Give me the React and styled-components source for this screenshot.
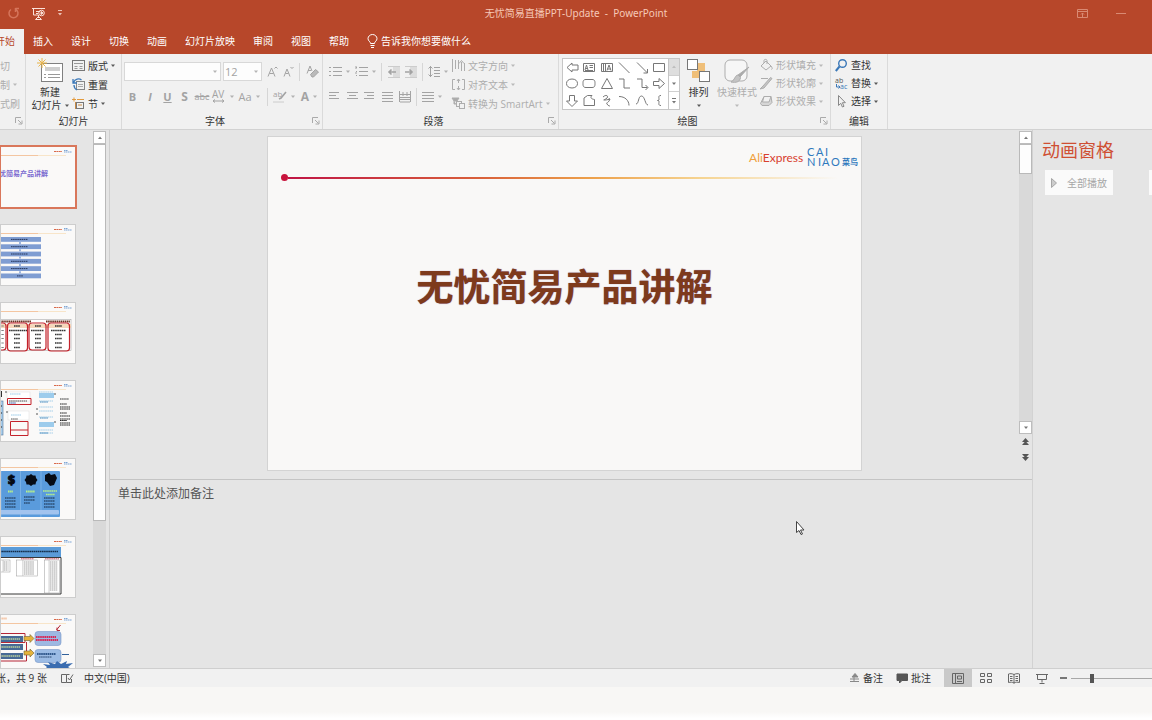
import React, { useState } from "react";
import styled, { createGlobalStyle } from "styled-components";

const GlobalStyle = createGlobalStyle`
  * {
    box-sizing: border-box;
  }
  body {
    margin: 0;
    background: #fff;
    overflow: hidden;
  }
  button, select, input, textarea {
    font-family: inherit;
    font-size: inherit;
    color: inherit;
    margin: 0;
  }
`;

const Window = styled.div`
  display: flex;
  flex-direction: column;
  height: 100vh;
  overflow: hidden;
  font-family: "Open Sans", "Noto Sans CJK SC", sans-serif;
  font-size: 10px;
  line-height: 14px;
  color: #333;
`;
const Svg = styled.svg`
  display: block;
  flex: none;
  overflow: visible;
  fill: none;
  stroke: currentColor;
`;
const PlainButton = styled.button`
  display: flex;
  align-items: center;
  justify-content: center;
  flex: none;
  padding: 0;
  border: 0;
  background: none;
  line-height: 14px;
  white-space: nowrap;
`;

// Title bar
const TitleBar = styled.header`
  display: grid;
  grid-template-columns: 1fr auto 1fr;
  align-items: center;
  flex: none;
  height: 27px;
  padding-bottom: 1px;
  background: #b7472a;
  color: #f6c9b8;
`;
const QuickAccess = styled.div`
  display: flex;
  align-items: center;
  gap: 12px;
  padding-left: 8px;
`;
const WindowTitle = styled.h1`
  margin: 0;
  font-family: "Noto Sans", "Noto Sans CJK SC", sans-serif;
  font-size: 10px;
  font-weight: 400;
`;
const WindowControls = styled.div`
  display: flex;
  justify-content: flex-end;
  gap: 28px;
  padding-right: 25px;
  color: #d98a73;
`;
const QuickButton = styled(PlainButton)`
  color: ${(p) => (p.$faded ? "#d5755b" : "#fbe3da")};
`;

// Tabs
const TabBar = styled.nav`
  display: flex;
  flex: none;
  height: 27px;
  padding-top: 2px;
  margin-left: -14px;
  background: #b7472a;
`;
const Tab = styled(PlainButton)`
  padding: 0 9px 2px;
  color: ${(p) => (p.$active ? "#b7472a" : "#fff")};
  background: ${(p) => (p.$active ? "#f1f1f1" : "none")};
`;
const TellMe = styled(Tab)`
  gap: 3px;
`;

// Ribbon
const Ribbon = styled.div`
  display: flex;
  flex: none;
  height: 76px;
  background: #f1f1f1;
  border-bottom: 1px solid #d2d2d2;
`;
const Group = styled.section`
  display: flex;
  flex-direction: column;
  flex: none;
  width: ${(p) => p.$width}px;
  padding-top: 2px;
  border-right: 1px solid #dadada;
`;
const GroupBody = styled.div`
  display: flex;
  height: 57px;
  padding-left: ${(p) => p.$left || 0}px;
`;
const GroupFooter = styled.div`
  display: flex;
  align-items: center;
  height: 16px;
`;
const GroupLabel = styled.h2`
  flex: 1;
  margin: 0;
  font-size: 10px;
  font-weight: 400;
  line-height: 16px;
  text-align: center;
`;
const LauncherButton = styled(PlainButton)`
  justify-content: flex-end;
  width: 14px;
  padding-right: 2px;
`;
const Stack = styled.div`
  display: flex;
  flex-direction: column;
  margin-left: ${(p) => p.$left || 0}px;
`;
const SmallButton = styled(PlainButton)`
  justify-content: flex-start;
  gap: 3px;
  height: ${(p) => (p.$tight ? 18 : 19)}px;
  color: ${(p) => (p.$disabled ? "#adadad" : "#333")};
`;
const BigButton = styled(PlainButton)`
  flex-direction: column;
  justify-content: flex-start;
  width: ${(p) => p.$width}px;
  height: 57px;
  padding-top: 2px;
  line-height: 13px;
  color: ${(p) => (p.$disabled ? "#adadad" : "#333")};
`;
const BigLabel = styled.span`
  display: flex;
  flex-direction: column;
  align-items: center;
  margin-top: 2px;
`;
const BigLine = styled.span`
  display: flex;
  align-items: center;
  gap: 3px;
  height: 13px;
`;
const ToolRow = styled.div`
  display: flex;
  align-items: center;
  height: 25px;
`;
const Tools = styled.div`
  padding-top: 3px;
`;
const Tool = styled(PlainButton)`
  gap: 4px;
  width: ${(p) => p.$w}px;
  height: 20px;
  font-size: ${(p) => p.$size || 11}px;
  font-weight: ${(p) => (p.$bold ? 700 : 400)};
  font-style: ${(p) => (p.$italic ? "italic" : "normal")};
  text-decoration: ${(p) => p.$line || "none"};
  color: #a3a3a3;
`;
const Divider = styled.span`
  flex: none;
  width: 1px;
  height: 18px;
  margin: 0 ${(p) => p.$gap || 3}px;
  background: #d6d6d6;
`;
const SelectBox = styled.label`
  display: flex;
  align-items: center;
  width: ${(p) => p.$w}px;
  height: 19px;
  margin-right: 2px;
  padding-right: 3px;
  border: 1px solid #d8d8d8;
  background: #fdfdfd;
  color: #a3a3a3;
  font-size: 11px;
`;
const FontSelect = styled.select`
  flex: 1;
  min-width: 0;
  padding: 0 1px;
  border: 0;
  appearance: none;
  background: none;
`;

const Gallery = styled.div`
  display: flex;
  height: 52px;
  margin-top: 2px;
  border: 1px solid #c6c6c6;
  background: #fff;
`;
const Shapes = styled.div`
  display: grid;
  grid-template-columns: repeat(6, 1fr);
  width: 105px;
`;
const GallerySide = styled.div`
  display: grid;
  grid-template-rows: repeat(3, 1fr);
  width: 11px;
  border-left: 1px solid #c6c6c6;
`;
const GalleryArrow = styled(PlainButton)`
  background: ${(p) => (p.$off ? "#dedede" : "#fff")};
  color: ${(p) => (p.$off ? "#b5b5b5" : "#555")};
  border-bottom: ${(p) => (p.$last ? 0 : "1px solid #d0d0d0")};
`;

// Workspace
const Workspace = styled.main`
  display: flex;
  flex: 1;
  min-height: 0;
  background: #e5e5e5;
`;
const ThumbPane = styled.aside`
  display: flex;
  flex: none;
  width: 110px;
  padding-right: 3px;
  border-right: 1px solid #cfcfcf;
`;
const ThumbList = styled.div`
  display: flex;
  flex-direction: column;
  gap: 16px;
  flex: 1;
  padding-top: 16px;
  overflow: hidden;
`;
const Thumb = styled.button`
  display: block;
  flex: none;
  width: 76px;
  height: 62px;
  padding: 0;
  border: 0;
  overflow: hidden;
  background: #faf9f8;
  outline: ${(p) => (p.$active ? "2px solid #d9775b" : "1px solid #cdcdcd")};
  outline-offset: -1px;
`;
const Scrollbar = styled.div`
  display: flex;
  flex-direction: column;
  flex: none;
  width: 13px;
  padding: 1px 0 ${(p) => p.$bottom || 1}px;
  color: #555;
`;
const ScrollArrow = styled(PlainButton)`
  height: 13px;
  border: 1px solid #bdbdbd;
  background: #fff;
`;
const ScrollTrack = styled.div`
  flex: 1;
  background: #d9d9d9;
`;
const ScrollThumb = styled.div`
  height: ${(p) => p.$size}%;
  border: 1px solid #b9b9b9;
  background: #fdfdfd;
`;
const SlideJump = styled(PlainButton)`
  height: 15px;
`;
const Editor = styled.div`
  display: flex;
  flex-direction: column;
  flex: 1;
  min-width: 0;
`;
const Stage = styled.div`
  display: flex;
  flex: 1;
  min-height: 0;
`;
const SlideArea = styled.div`
  display: flex;
  justify-content: center;
  flex: 1;
  min-width: 0;
  padding: 6px 0 8px;
`;
const Slide = styled.article`
  display: flex;
  flex-direction: column;
  height: 100%;
  aspect-ratio: 16 / 9;
  padding: 10px 3px 0 13px;
  border: 1px solid #d3d3d3;
  background: #f9f8f7;
`;
const Brand = styled.div`
  display: flex;
  justify-content: flex-end;
  align-items: center;
  gap: 4px;
  height: 22px;
`;
const AliExpress = styled.span`
  font-family: Lato, sans-serif;
  font-size: 12px;
  color: #d8402f;
`;
const Ali = styled.span`
  color: #f0a03c;
`;
const Rule = styled.div`
  display: flex;
  align-items: center;
  height: 7px;
  margin: 5px 20px 0 0;
`;
const RuleDot = styled.span`
  width: 7px;
  height: 7px;
  border-radius: 50%;
  background: #c8143c;
`;
const RuleLine = styled.span`
  flex: 1;
  height: 2px;
  background: linear-gradient(90deg, #c01545, #d9603a 35%, #eda04a 55%, #f6d491 75%, #f9f8f7);
`;
const SlideTitle = styled.h2`
  margin: 82px 0 0;
  padding-right: 10px;
  font-size: 37px;
  line-height: 48px;
  font-weight: 700;
  text-align: center;
  color: #7e3a1c;
  text-shadow: 0 0 1px #8a6a9a;
`;
const Notes = styled.textarea`
  display: block;
  flex: none;
  height: 189px;
  padding: 5px 8px;
  border: 0;
  border-top: 1px solid #c4c4c4;
  outline: 0;
  resize: none;
  background: #e5e5e5;
  font-size: 12px;
  line-height: 17px;
  color: #555;
  &::placeholder {
    color: #555;
    opacity: 1;
  }
`;
const AnimationPane = styled.aside`
  flex: none;
  width: 120px;
  padding: 7px 0 0 9px;
  border-left: 1px solid #d2d2d2;
  overflow: hidden;
`;
const PaneTitle = styled.h2`
  margin: 0 0 7px;
  font-size: 18px;
  line-height: 26px;
  font-weight: 400;
  color: #cf4f33;
`;
const PaneActions = styled.div`
  display: flex;
  gap: 36px;
  padding-left: 3px;
`;
const PlayAll = styled(PlainButton)`
  gap: 10px;
  width: 68px;
  height: 25px;
  background: #fafafa;
  color: #a6a6a6;
`;
const MoveButton = styled(PlainButton)`
  width: 25px;
  height: 25px;
  background: #fafafa;
`;

// Status bar
const StatusBar = styled.footer`
  display: flex;
  align-items: center;
  flex: none;
  height: 19px;
  border-top: 1px solid #cfcfcf;
  background: #f1f1f1;
  overflow: hidden;
`;
const SlideCount = styled.span`
  margin-left: -4px;
  margin-right: 14px;
  white-space: nowrap;
`;
const StatusButton = styled(PlainButton)`
  gap: 3px;
  margin-left: ${(p) => p.$gap || 0}px;
`;
const Spacer = styled.span`
  flex: 1;
`;
const Views = styled.div`
  display: flex;
  margin-left: 13px;
`;
const ViewButton = styled(PlainButton)`
  width: 28px;
  height: 18px;
  color: #666;
  background: ${(p) => (p.$active ? "#c9c9c9" : "none")};
`;
const Zoom = styled.input`
  flex: none;
  width: 112px;
  height: 12px;
  margin-left: 4px;
  margin-right: -31px;
  appearance: none;
  background: linear-gradient(#a8a8a8, #a8a8a8) center / 100% 1px no-repeat;
  &::-webkit-slider-thumb {
    appearance: none;
    width: 4px;
    height: 9px;
    background: #555;
  }
`;
const BottomStrip = styled.div`
  flex: none;
  height: 33px;
  background: linear-gradient(#f8f7f5 75%, #fff 95%);
`;
const Pointer = styled(Svg)`
  position: absolute;
  left: 796px;
  top: 521px;
  pointer-events: none;
`;

const Caret = ({ up, bar }) => (
  <Svg width="4" height={bar ? 6 : 3} viewBox={bar ? "0 0 4 6" : "0 0 4 3"} opacity=".8">
    {bar && <path d="M0 .5h4" />}
    <path d={up ? "M0 3h4L2 .5z" : bar ? "M0 3h4L2 5.500z" : "M0 .5h4L2 3z"} fill="currentColor" stroke="none" />
  </Svg>
);

const Launcher = () => (
  <LauncherButton aria-label="更多选项">
    <Svg width="8" height="8" viewBox="0 0 8 8" color="#aaa">
      <path d="M.5 6V.5H6M3 3l3.500 3.500M7 3.500V7H3.500" />
    </Svg>
  </LauncherButton>
);

const RibbonGroup = ({ label, width, left, launcher, children }) => (
  <Group $width={width}>
    <GroupBody $left={left}>{children}</GroupBody>
    <GroupFooter>
      <GroupLabel>{label}</GroupLabel>
      {launcher && <Launcher />}
    </GroupFooter>
  </Group>
);

const small = {
  layout: (
    <>
      <rect x=".5" y="1.500" width="12" height="10" stroke="#777" />
      <path d="M2 4.500h9M2.500 7.500h3M2.500 9.500h3M7.500 7.500h3M7.500 9.500h3" stroke="#999" />
    </>
  ),
  reset: (
    <>
      <rect x="4.500" y="3.500" width="8" height="8" stroke="#888" />
      <path d="M6 6.500h5M6 8.500h5" stroke="#aaa" />
      <path d="M1 1v4h4M1.500 4.500C3 1 7 0 9.500 2M2 7c0 2 1 4 3 5" stroke="#3b78b8" strokeWidth="1.300" />
    </>
  ),
  section: (
    <>
      <path d="M0 2.500h4M2 .500v4M5 2.500h7" stroke="#e39a3c" />
      <rect x="4.500" y="5.500" width="7" height="6" stroke="#777" />
      <path d="M3.500 5v7M6 8h4" stroke="#c98b45" />
    </>
  ),
  direction: <path d="M.5 0v13M3.500 1v9M6.500 1v9M9.500 3v9M7 4.500l2.500-3 2.500 3M12.500 4v8" />,
  align: <path d="M3 1.500H.500v10H3M10 1.500h2.500v10H10M6.500 1v4M5 3l1.500-2L8 3M6.500 12V8M5 10l1.500 2L8 10" />,
  smart: (
    <>
      <path d="M0 1h7L5 4H2zM2 4v3h2" fill="#aaa" />
      <rect x="4.500" y="4.500" width="5" height="5" fill="#f1f1f1" />
      <rect x="7.500" y="6.500" width="5" height="5" fill="#f1f1f1" />
    </>
  ),
  fill: <path d="M1 7l5-5 5 5-5 4zM4 4V1.500c0-1.500 3-1.500 3 0V5M11 7c1.500 2 1.500 3 .500 3.500" />,
  outline: (
    <>
      <path d="M8 1.500H1" />
      <path d="M0 12l4-1 8-9.500-1.500-1L3 9z" fill="#c4c4c4" />
    </>
  ),
  effect: <path d="M4 1.500h7l1 6-3 3H2l-1.500-2zM4 1.500L2.500 7H9l2-5.500" fill="#d6d6d6" />,
  find: (
    <>
      <circle cx="7.500" cy="4.500" r="3.800" stroke="#3b78b8" strokeWidth="1.400" />
      <path d="M4.500 7.500L.800 12" stroke="#3b78b8" strokeWidth="2" />
    </>
  ),
  select: <path d="M3.500 .500v10l2.300-2.200 1.600 3.700 1.600-.700-1.600-3.600h3z" stroke="#888" />,
};
const SmallIcon = ({ name }) => (
  <Svg width="13" height="13" viewBox="0 0 13 13">{small[name]}</Svg>
);

const SmallItem = ({ icon, text, caret, disabled, tight }) => (
  <SmallButton $disabled={disabled} $tight={tight}>
    {icon}
    {text}
    {caret && <Caret />}
  </SmallButton>
);

// Bars for the alignment buttons: [x, width] of each line
const Lines = ({ rows, w = 12 }) => (
  <Svg width={w} height="10" viewBox={`0 0 ${w} 10`}>
    {rows.map(([x, len], i) => (
      <path key={i} d={`M${x} ${i * 3 + 0.5}h${len}`} />
    ))}
  </Svg>
);

const shapes = [
  "M13 4H7V2L2 6.500 7 11V9h6V4z",
  "M1.500 2.500h11v8h-11zM3 9l1.500-5L6 9M3.500 7.500h2M7.500 4.500H11M7.500 6.500H11M3 9.500h8",
  "M1.500 2.500h11v8h-11zM3.500 3v7M5.500 3v7M7 9.500L9 4l2 5.500M7.500 8h3",
  "M2 1.500L12.500 12",
  "M2 1.500L12.500 12M12.500 8v4h-4",
  "M1.500 2.500h11v8h-11z",
  "M7 2c3.500 0 5.500 2 5.500 4.500S10.500 11 7 11 1.500 9 1.500 6.500 3.500 2 7 2z",
  "M4 2.500h6c3 0 3 2 3 4s0 4-3 4H4c-3 0-3-2-3-4s0-4 3-4z",
  "M7 1.500L12.500 11.500h-11z",
  "M2 2h5v9h6",
  "M2 2h5v8.500h5.500M10.500 8l2.500 2.500-2.500 2.500",
  "M1.500 4.500H7v-3l5.500 5-5.500 5v-3H1.500z",
  "M4.500 1.500h5V7h3L7 12.500 1.500 7h3z",
  "M2 11.500V4l3.500-2.500H10c-2 2-1 3.500 2.500 4v6z",
  "M3 3c3-3 6-1 4 1S2 6 5 6s6-2 4 1-3 1-2 3 3 2 3 2M9 4l1 2",
  "M2 2.500c6 0 10 4 10 9",
  "M1 10C4 10 3 2 6.500 2S10 11 13 11",
  "M9 1.500c-3 0-2 2-2 3.500S6.500 6.500 5.500 6.500c1 0 1.500 0 1.500 1.500s-1 3.500 2 3.500",
];

// Header that every miniature slide carries
const MiniHeader = () => (
  <>
    <path d="M0 9.500h38" stroke="#f2b98a" strokeWidth=".8" />
    <path d="M38 9.500h28" stroke="#f8e0bd" strokeWidth=".8" />
    <path d="M54 5.500h8" stroke="#d9694a" strokeDasharray="2 .4" />
    <path d="M64 4.500h4M64 6h8" stroke="#7fa6d6" strokeDasharray="1.500 .4" />
  </>
);
const scribble = (x, y, len, color = "#333", w = 1) => (
  <path key={`${x}-${y}`} d={`M${x} ${y}h${len}`} stroke={color} strokeWidth={w} strokeDasharray="1.600 .500" />
);

const minis = [
  <text x="48" y="30" textAnchor="end" fontSize="7" fontWeight="700" fill="#7c6bd0" stroke="none">忧简易产品讲解</text>,
  <>
    {[0, 1, 2, 3, 4, 5].map((i) => (
      <g key={i}>
        <rect x="-2" y={13 + i * 7.3} width="43" height="4.800" fill="#7f9dd2" stroke="none" />
        {scribble(i === 5 ? 17 : 11, 15.4 + i * 7.3, i === 5 ? 6 : 17, "#25355c")}
        {i < 5 && <path d={`M20 ${18 + i * 7.3}v2`} stroke="#9db4dd" strokeWidth="2" />}
      </g>
    ))}
  </>,
  <>
    <rect x="0" y="17.500" width="71" height="31" fill="#fff" stroke="#999" strokeWidth=".5" />
    <rect x="0" y="22" width="71" height="4" fill="#f5d7bb" stroke="none" />
    {scribble(0, 19.500, 31, "#6b3325", 2)}
    {scribble(46, 19.500, 24, "#6b3325", 2)}
    {[24, 28.500, 32.500, 36.500, 41, 45.500].map((y, i) => (
      <g key={y}>
        {scribble(0, y, 4, "#777")}
        {scribble(i === 1 ? 9 : 14, y, i === 1 ? 18 : 6, "#333", 1.500)}
        {scribble(i === 1 ? 31 : 35, y, i === 1 ? 13 : 6, "#333", 1.500)}
        {scribble(i === 1 ? 51 : 55, y, i === 1 ? 15 : 7, "#333", 1.500)}
      </g>
    ))}
    <g stroke="#c4222b" strokeWidth="1.200">
      <rect x="-8" y="21" width="14" height="27" rx="3" />
      <rect x="7.500" y="21" width="20" height="28" rx="3" />
      <rect x="29" y="21" width="17" height="27" rx="3" />
      <rect x="48" y="21" width="21.500" height="28" rx="3" />
    </g>
  </>,
  <>
    <rect x="0" y="11" width="2" height="6" fill="#333" stroke="none" />
    <rect x="-1" y="21" width="4" height="34" fill="#a8cdec" stroke="#55779a" strokeWidth=".6" />
    <path d="M0 26h2M0 33h2M0 40h2M0 47h2" stroke="#222" />
    <rect x="7" y="12" width="23" height="9" fill="#fff" stroke="#ddd" strokeWidth=".5" />
    {scribble(10, 14, 11, "#9ccbe8")}
    {scribble(9, 21, 18, "#555")}
    {scribble(9, 23, 7, "#315aa8")}
    <rect x="8" y="31" width="21" height="9" fill="#fff" stroke="#ddd" strokeWidth=".5" />
    {scribble(11, 35, 10, "#9ccbe8")}
    {scribble(11, 39, 7, "#555")}
    <path d="M7.500 18.500h23.500v6H7.500zM10.500 41.500H28v14H10.500zM10.500 50H28" stroke="#c4222b" />
    {[13, 42].map((y) => <rect key={y} x="39" y={y} width="15" height="5" fill="#9dccec" stroke="none" />)}
    {[12, 21, 27, 31, 37, 50, 53].map((y) => scribble(39, y, 14, "#a6cfe9"))}
    {[22, 38, 53].map((y) => scribble(40, y, 8, "#3f87bd"))}
    <path d="M54 14h2M36 29h2M36 34h2M54 42h2M5 12h2M6 32h2" stroke="#555" />
    {scribble(60, 19, 9, "#333")}
    {[24, 27, 29, 33, 36, 39, 40.500, 43, 45].map((y, i) => scribble(60, y, i % 3 ? 10 : 7, "#222"))}
  </>,
  <>
    <rect x="0" y="13" width="60" height="46" rx="1" fill="#5a9bdc" stroke="none" />
    <path d="M1 13v46M20.500 13v46M41 13v46" stroke="#78b0e6" />
    <text x="11.500" y="26" textAnchor="middle" fontSize="12" fontWeight="800" fill="#060b14" stroke="#060b14">$</text>
    <path d="M31 16l2 1.500 2.500 0 .500 2.500 1.500 2-1.500 2-.500 2.500h-2.500l-2 1.500-2-1.500h-2.500l-.500-2.500-1.500-2 1.500-2 .500-2.500h2.500z" fill="#060b14" stroke="none" />
    <path d="M45 17l4-2 2 2 4-1 2 4-3 7-4 1-3-4-2-1z" fill="#060b14" stroke="none" />
    {scribble(8, 33.500, 5, "#b6f08a", 2)}
    {scribble(26, 33.500, 9, "#b6f08a", 2)}
    {scribble(43, 33, 14, "#b6f08a", 1.500)}
    {scribble(46, 36.500, 9, "#b6f08a", 1.500)}
    {[40, 43, 46, 49].map((y, i) => (
      <g key={y}>
        {scribble(5, y, 11, "#12243c")}
        {i < 3 && scribble(24, y - 1, i === 2 ? 6 : 11, "#12243c")}
        {scribble(44, y, 11, "#12243c")}
      </g>
    ))}
    <rect x="0" y="52" width="59" height="4.500" rx="1" fill="#a2c3ee" stroke="none" />
  </>,
  <>
    <rect x="0" y="11" width="61" height="10" fill="#5b9bd8" stroke="none" />
    {scribble(0, 15.500, 58, "#142c48", 1.600)}
    <path d="M0 21.500h61v36.500H0" fill="#fff" stroke="#222" strokeWidth=".9" />
    {[[0, 24, 10, 12], [16.5, 24, 21, 16], [44.5, 24, 15, 33]].map(([x, y, w, h]) => (
      <g key={x}>
        <rect x={x} y={y} width={w} height={h} stroke="#999" strokeWidth=".5" />
        {Array.from({ length: Math.floor(h / 2) - 1 }, (_, i) => scribble(x + w * 0.35, y + 2 + i * 2, w * 0.5, "#888", 0.8))}
        <path d={`M${x + w * 0.3} ${y}v${h}`} stroke="#aaa" strokeWidth=".5" />
      </g>
    ))}
    {scribble(21, 22.800, 13, "#c95566")}
    {scribble(45, 22.800, 14, "#c95566")}
  </>,
  <>
    {scribble(0, 4.500, 7, "#f3c3a3", 2)}
    {[22, 30, 39].map((y) => (
      <g key={y}>
        <rect x="-2" y={y} width="25" height="6" fill="#476a96" stroke="none" />
        {scribble(0, y + 3, 20, "#b9cf9c", 1.500)}
      </g>
    ))}
    <path d="M0 19.500h25v9H0M26.500 28v19H0" stroke="#b52736" />
    <path d="M24 22.500h6v-2l4 4-4 4v-2h-6zM24 37h6v-2l4 4-4 4v-2h-6z" fill="#e5b33b" stroke="#6d6237" strokeWidth=".6" />
    <rect x="35" y="17.500" width="26" height="14" rx="3" fill="#9db8e2" stroke="#7897c7" strokeWidth=".6" />
    <rect x="35" y="35.500" width="26" height="13" rx="3" fill="#9bbbe4" stroke="#7897c7" strokeWidth=".6" />
    {scribble(36, 23, 20, "#d72957", 2)}
    {scribble(36, 26, 22, "#d72957", 2)}
    {scribble(37, 40, 19, "#30588c", 2)}
    {scribble(39, 43, 13, "#26456e", 1)}
    <path d="M60.500 11l-4 5M57 13.500v3h3" stroke="#b52736" />
    <path d="M62 40.500h7" stroke="#32619b" />
    <path d="M43 50l7 1-2-3 7 2 2-3 4 3 6-3-1 3 7-1-5 4 5 3H44l3-3z" fill="#3b6db0" stroke="none" />
  </>,
];

const tabs = ["开始", "插入", "设计", "切换", "动画", "幻灯片放映", "审阅", "视图", "帮助"];

function ScrollPart({ size, bottom, children }) {
  return (
    <Scrollbar $bottom={bottom}>
      <ScrollArrow aria-label="向上滚动"><Caret up /></ScrollArrow>
      <ScrollTrack>
        <ScrollThumb $size={size} />
      </ScrollTrack>
      <ScrollArrow aria-label="向下滚动"><Caret /></ScrollArrow>
      {children}
    </Scrollbar>
  );
}

function FontTools() {
  return (
    <Tools>
      <ToolRow>
        <SelectBox $w={97}>
          <FontSelect aria-label="字体" defaultValue=""><option value=""></option></FontSelect>
          <Caret />
        </SelectBox>
        <SelectBox $w={39}>
          <FontSelect aria-label="字号" defaultValue="12"><option>12</option></FontSelect>
          <Caret />
        </SelectBox>
        <Tool $w={16} aria-label="增大字号">
          <Svg width="11" height="12" viewBox="0 0 11 12"><path d="M1 10.500L4.500 2 8 10.500M2.500 7.500h4M7.500 2.500L9 1l1.500 1.500" /></Svg>
        </Tool>
        <Tool $w={16} aria-label="减小字号">
          <Svg width="11" height="12" viewBox="0 0 11 12"><path d="M1 10.500L4 3l3 7.500M2.500 7.500h3M7.500 1L9 2.500 10.500 1" /></Svg>
        </Tool>
        <Divider />
        <Tool $w={18} aria-label="清除格式">
          <Svg width="13" height="13" viewBox="0 0 13 13">
            <path d="M1 8.500L4 1l2 5M2 5.500h3" />
            <path d="M4.500 9.500l5-5L12.500 7l-5 5H6z" fill="#b9b9b9" />
          </Svg>
        </Tool>
      </ToolRow>
      <ToolRow>
        <Tool $w={17} $bold>B</Tool>
        <Tool $w={18} $bold $italic>I</Tool>
        <Tool $w={17} $bold $line="underline">U</Tool>
        <Tool $w={17} $bold $size={12}>S</Tool>
        <Tool $w={18} $size={9} $line="line-through">abc</Tool>
        <Tool $w={24}>
          <Svg width="14" height="13" viewBox="0 0 14 13">
            <text x="0" y="8" fontSize="10" fill="currentColor" stroke="none">AV</text>
            <path d="M1 11h11M3 9.500L1 11l2 1.500M10 9.500l2 1.500-2 1.500" />
          </Svg>
          <Caret />
        </Tool>
        <Tool $w={28}>Aa<Caret /></Tool>
        <Divider $gap={4} />
        <Tool $w={24} aria-label="突出显示">
          <Svg width="14" height="13" viewBox="0 0 14 13">
            <text x="0" y="7" fontSize="8" fill="currentColor" stroke="none">ab</text>
            <path d="M13 2L8 8l-2 1" strokeWidth="1.600" />
            <path d="M0 12h11" stroke="#ccc" />
          </Svg>
          <Caret />
        </Tool>
        <Tool $w={26} $bold $size={12}>A<Caret /></Tool>
      </ToolRow>
    </Tools>
  );
}

function ParagraphTools() {
  return (
    <Tools>
      <ToolRow>
        {[0, 1].map((n) => (
          <Tool key={n} $w={26} aria-label={n ? "编号" : "项目符号"}>
            <Svg width="13" height="12" viewBox="0 0 13 12">
              {[0, 1, 2].map((i) => (
                <path key={i} d={`M${n} ${i * 4 + 1.5}h${2 - n}M4 ${i * 4 + 1.5}h9`} />
              ))}
              {n === 1 && <path d="M1 0v3M0 7h2" />}
            </Svg>
            <Caret />
          </Tool>
        ))}
        <Divider />
        <Tool $w={17} aria-label="减少缩进">
          <Svg width="13" height="12" viewBox="0 0 13 12">
            <rect x="6" y="0" width="7" height="12" fill="#dcdcdc" stroke="none" />
            <path d="M9 6H2M4.500 3.500L2 6l2.500 2.500" strokeWidth="1.600" />
            <path d="M1 .5h12M1 11.500h12" stroke="#ccc" />
          </Svg>
        </Tool>
        <Tool $w={17} aria-label="增加缩进">
          <Svg width="13" height="12" viewBox="0 0 13 12">
            <rect x="6" y="0" width="7" height="12" fill="#dcdcdc" stroke="none" />
            <path d="M1 6h7M5.500 3.500L8 6 5.500 8.500" strokeWidth="1.600" />
            <path d="M1 .5h12M1 11.500h12" stroke="#ccc" />
          </Svg>
        </Tool>
        <Divider />
        <Tool $w={24} aria-label="行距">
          <Svg width="12" height="13" viewBox="0 0 12 13">
            <path d="M2.500 1v11M.500 3.500l2-2 2 2M.500 9.500l2 2 2-2M6 2.500h6M6 5.500h6M6 8.500h6M6 11.500h6" />
          </Svg>
          <Caret />
        </Tool>
      </ToolRow>
      <ToolRow>
        <Tool $w={17} aria-label="左对齐"><Lines rows={[[0, 10], [0, 7], [0, 10]]} w={11} /></Tool>
        <Tool $w={18} aria-label="居中"><Lines rows={[[0, 11], [2, 7], [0, 11]]} w={11} /></Tool>
        <Tool $w={17} aria-label="右对齐"><Lines rows={[[0, 10], [3, 7], [0, 10]]} w={11} /></Tool>
        <Tool $w={18} aria-label="两端对齐"><Lines rows={[[0, 11], [0, 11], [0, 11], [0, 11]]} w={11} /></Tool>
        <Tool $w={17} aria-label="分散对齐">
          <Svg width="12" height="12" viewBox="0 0 12 12"><path d="M.5 0v11M11.500 0v11M1 3.500h10M1 6.500h10M1 8.500h10M1 11h10M4 1v4M8 1v4" /></Svg>
        </Tool>
        <Divider />
        <Tool $w={24} aria-label="分栏"><Lines rows={[[0, 12], [0, 12], [0, 12], [0, 12]]} /><Caret /></Tool>
      </ToolRow>
    </Tools>
  );
}

function SlideCanvas() {
  return (
    <Slide>
      <Brand>
        <AliExpress><Ali>Ali</Ali>Express</AliExpress>
        <Svg width="51" height="20" viewBox="0 0 51 20">
          <g fill="#2f78bd" stroke="none" fontFamily="Lato, sans-serif" fontSize="11">
            <text x="0 9 18" y="8">CAI</text>
            <text x="0 11 15 24" y="18">NIAO</text>
            <text x="35" y="17" fontSize="8" fontWeight="700" fontFamily="Noto Sans CJK SC, sans-serif">菜鸟</text>
          </g>
        </Svg>
      </Brand>
      <Rule>
        <RuleDot />
        <RuleLine />
      </Rule>
      <SlideTitle>无忧简易产品讲解</SlideTitle>
    </Slide>
  );
}

function App() {
  const [tab, setTab] = useState(0);
  const [current, setCurrent] = useState(0);
  const [zoom, setZoom] = useState(18);

  return (
    <Window>
      <GlobalStyle />
      <TitleBar>
        <QuickAccess>
          <QuickButton $faded aria-label="重做">
            <Svg width="12" height="12" viewBox="0 0 12 12"><path d="M7.500 1.500H11M7.500 1v4M8 2.500A4.500 4.500 0 1 1 3 2.500" strokeWidth="1.500" /></Svg>
          </QuickButton>
          <QuickButton aria-label="从头开始放映">
            <Svg width="14" height="13" viewBox="0 0 14 13">
              <path d="M0 1.500h13M1.500 2v6H6M4 4.500h4M4 6.500h2M6.500 8v3M3.500 12.500l3-3 3 3z" />
              <circle cx="9.500" cy="6" r="2.800" />
              <path d="M9 4.500v3L11 6z" fill="currentColor" />
            </Svg>
          </QuickButton>
          <QuickButton aria-label="自定义快速访问工具栏"><Caret bar /></QuickButton>
        </QuickAccess>
        <WindowTitle>无忧简易直播PPT-Update&nbsp; -&nbsp; PowerPoint</WindowTitle>
        <WindowControls>
          <Svg width="11" height="9" viewBox="0 0 11 9"><path d="M.5 .5h10v8H.500zM1 2.500h9M5.500 8V4M4 5.500L5.500 4 7 5.500" /></Svg>
          <Svg width="11" height="9" viewBox="0 0 11 9"><path d="M0 4.500h10" /></Svg>
        </WindowControls>
      </TitleBar>
      <TabBar>
        {tabs.map((name, i) => (
          <Tab key={name} $active={i === tab} onClick={() => setTab(i)}>{name}</Tab>
        ))}
        <TellMe>
          <Svg width="11" height="14" viewBox="0 0 11 14">
            <path d="M3.500 9.500C3.500 7.500 1 7 1 4.700a4.500 4.200 0 0 1 9 0C10 7 7.500 7.500 7.500 9.500zM3.500 11.500h4M4 13.500h3" />
          </Svg>
          告诉我你想要做什么
        </TellMe>
      </TabBar>

      <Ribbon>
        <RibbonGroup label="" width={26} launcher>
          <Stack>
            <SmallItem text="切" disabled />
            <SmallItem text="制" caret disabled />
            <SmallItem text="式刷" disabled />
          </Stack>
        </RibbonGroup>
        <RibbonGroup label="幻灯片" width={96} left={4}>
          <BigButton $width={40}>
            <Svg width="27" height="26" viewBox="0 0 27 26">
              <rect x="4.500" y="5.500" width="21" height="18" fill="#fff" stroke="#808080" />
              <rect x="8" y="9" width="15" height="4" fill="#cfcfcf" stroke="none" />
              <path d="M7 16.500h2M11 16.500h12M7 19.500h2M11 19.500h12" stroke="#999" />
              <path d="M5 0v10M0 5h10M1.500 1.500l7 7M8.500 1.500l-7 7" stroke="#e8b44a" />
            </Svg>
            <BigLabel>
              <BigLine>新建</BigLine>
              <BigLine>幻灯片<Caret /></BigLine>
            </BigLabel>
          </BigButton>
          <Stack $left={2}>
            <SmallItem icon={<SmallIcon name="layout" />} text="版式" caret />
            <SmallItem icon={<SmallIcon name="reset" />} text="重置" />
            <SmallItem icon={<SmallIcon name="section" />} text="节" caret />
          </Stack>
        </RibbonGroup>
        <RibbonGroup label="字体" width={201} left={2} launcher>
          <FontTools />
        </RibbonGroup>
        <RibbonGroup label="段落" width={236} left={3} launcher>
          <ParagraphTools />
          <Stack $left={2}>
            <SmallItem icon={<SmallIcon name="direction" />} text="文字方向" caret disabled />
            <SmallItem icon={<SmallIcon name="align" />} text="对齐文本" caret disabled />
            <SmallItem icon={<SmallIcon name="smart" />} text="转换为 SmartArt" caret disabled />
          </Stack>
        </RibbonGroup>
        <RibbonGroup label="绘图" width={272} left={3} launcher>
          <Gallery>
            <Shapes>
              {shapes.map((d) => (
                <PlainButton key={d} aria-label="形状">
                  <Svg width="14" height="13" viewBox="0 0 14 13" color="#777"><path d={d} /></Svg>
                </PlainButton>
              ))}
            </Shapes>
            <GallerySide>
              <GalleryArrow $off aria-label="上一行"><Caret up /></GalleryArrow>
              <GalleryArrow aria-label="下一行"><Caret /></GalleryArrow>
              <GalleryArrow $last aria-label="更多形状"><Caret bar /></GalleryArrow>
            </GallerySide>
          </Gallery>
          <BigButton $width={37}>
            <Svg width="24" height="26" viewBox="0 0 24 26">
              <rect x="5" y="13" width="8" height="7" fill="#efbf79" stroke="none" />
              <rect x="10" y="5" width="8" height="9" fill="#efbf79" stroke="none" />
              <rect x=".5" y="1.500" width="10" height="10" fill="#fff" stroke="#777" />
              <rect x="12.500" y="13.500" width="10" height="10" fill="#fff" stroke="#777" />
            </Svg>
            <BigLabel>
              <BigLine>排列</BigLine>
              <BigLine><Caret /></BigLine>
            </BigLabel>
          </BigButton>
          <BigButton $width={40} $disabled>
            <Svg width="26" height="26" viewBox="0 0 26 26">
              <rect x="1" y="2" width="22" height="21" rx="5" fill="#f6f6f6" />
              <path d="M25 9l-9 10-2-2z" fill="#aaa" />
              <path d="M14 17c-3 0-3 5-7 7 5 1 9 0 9.500-4.500z" fill="#c4c4c4" />
            </Svg>
            <BigLabel>
              <BigLine>快速样式</BigLine>
              <BigLine><Caret /></BigLine>
            </BigLabel>
          </BigButton>
          <Stack $left={3}>
            <SmallItem icon={<SmallIcon name="fill" />} text="形状填充" caret disabled tight />
            <SmallItem icon={<SmallIcon name="outline" />} text="形状轮廓" caret disabled tight />
            <SmallItem icon={<SmallIcon name="effect" />} text="形状效果" caret disabled tight />
          </Stack>
        </RibbonGroup>
        <RibbonGroup label="编辑" width={57} left={4}>
          <Stack>
            <SmallItem icon={<SmallIcon name="find" />} text="查找" tight />
            <SmallItem
              icon={
                <Svg width="13" height="13" viewBox="0 0 13 13">
                  <text x="0" y="6" fontSize="7" fill="#555" stroke="none">ab</text>
                  <text x="5" y="12" fontSize="7" fill="#3b78b8" stroke="none">ac</text>
                  <path d="M1.500 7v3H5M3.500 8.500L5 10l-1.500 1.500" stroke="#3b78b8" />
                </Svg>
              }
              text="替换"
              caret
              tight
            />
            <SmallItem icon={<SmallIcon name="select" />} text="选择" caret tight />
          </Stack>
        </RibbonGroup>
      </Ribbon>

      <Workspace>
        <ThumbPane>
          <ThumbList>
            {minis.map((drawing, i) => (
              <Thumb key={i} $active={i === current} aria-label={`幻灯片 ${i + 1}`} onClick={() => setCurrent(i)}>
                <Svg width="76" height="62" viewBox="0 0 76 62">
                  <MiniHeader />
                  {drawing}
                </Svg>
              </Thumb>
            ))}
          </ThumbList>
          <ScrollPart size={74} />
        </ThumbPane>
        <Editor>
          <Stage>
            <SlideArea>
              <SlideCanvas />
            </SlideArea>
            <ScrollPart size={11} bottom={15}>
              <SlideJump aria-label="上一张幻灯片">
                <Svg width="7" height="8" viewBox="0 0 7 8"><path d="M0 4h7L3.500 0zM0 7h7L3.500 3z" fill="currentColor" stroke="none" /></Svg>
              </SlideJump>
              <SlideJump aria-label="下一张幻灯片">
                <Svg width="7" height="8" viewBox="0 0 7 8"><path d="M0 1h7L3.500 5zM0 4h7L3.500 8z" fill="currentColor" stroke="none" /></Svg>
              </SlideJump>
            </ScrollPart>
          </Stage>
          <Notes aria-label="备注" placeholder="单击此处添加备注" />
        </Editor>
        <AnimationPane>
          <PaneTitle>动画窗格</PaneTitle>
          <PaneActions>
            <PlayAll>
              <Svg width="6" height="10" viewBox="0 0 6 10"><path d="M.5 .5v9L5.500 5z" fill="#ccc" /></Svg>
              全部播放
            </PlayAll>
            <MoveButton aria-label="上移" />
          </PaneActions>
        </AnimationPane>
      </Workspace>

      <StatusBar>
        <SlideCount>张，共 9 张</SlideCount>
        <PlainButton aria-label="拼写检查">
          <Svg width="12" height="11" viewBox="0 0 12 11" color="#666"><path d="M5.500 1.500h-5v8h5zM5.500 1.500h3M5.500 9.500h5V6M7 5l1.500 2L12 1.500" /></Svg>
        </PlainButton>
        <StatusButton $gap={11}>中文(中国)</StatusButton>
        <Spacer />
        <StatusButton>
          <Svg width="10" height="10" viewBox="0 0 10 10" color="#888">
            <path d="M2 4h6L5 .500zM0 6h9M0 8.500h9M4 3v6" fill="currentColor" />
          </Svg>
          备注
        </StatusButton>
        <StatusButton $gap={13}>
          <Svg width="12" height="11" viewBox="0 0 12 11"><path d="M1 1h10.500v6.500H6L3.500 10V7.500H1z" fill="#555" stroke="#555" /></Svg>
          批注
        </StatusButton>
        <Views>
          <ViewButton $active aria-label="普通视图">
            <Svg width="12" height="11" viewBox="0 0 12 11"><path d="M.5 .5h11v10H.500zM3.500 1v9M5.500 3h4v3h-4zM5 8.500h5" /></Svg>
          </ViewButton>
          <ViewButton aria-label="幻灯片浏览">
            <Svg width="12" height="11" viewBox="0 0 12 11"><path d="M.5 .5h4v3h-4zM7.500 .5h4v3h-4zM.5 6.500h4v3h-4zM7.500 6.500h4v3h-4z" /></Svg>
          </ViewButton>
          <ViewButton aria-label="阅读视图">
            <Svg width="12" height="11" viewBox="0 0 12 11"><path d="M6 1.500v9M6 1.500C4 .500 2 .500.500 1v8.500c2-.500 4-.500 5.500.500 1.500-1 3.500-1 5.500-.500V1C10 .500 8 .500 6 1.500M2 3.500h2.500M2 5.500h2.500M2 7.500h2.500M7.500 3.500H10M7.500 5.500H10M7.500 7.500H10" /></Svg>
          </ViewButton>
          <ViewButton aria-label="幻灯片放映">
            <Svg width="12" height="11" viewBox="0 0 12 11"><path d="M0 1.500h12M1.500 2v4.500h9V2M6 6.500v3M3.500 10.500h5" /></Svg>
          </ViewButton>
        </Views>
        <StatusButton $gap={4} aria-label="缩小">
          <Svg width="7" height="2" viewBox="0 0 7 2" color="#777"><path d="M0 1h7" strokeWidth="2" /></Svg>
        </StatusButton>
        <Zoom type="range" aria-label="缩放" value={zoom} onChange={(e) => setZoom(e.target.value)} />
      </StatusBar>
      <BottomStrip />

      <Pointer width="9" height="14" viewBox="0 0 9 14">
        <path d="M.5 .5v11l2.500-2 2 4 1.500-.500-2-4H8z" fill="#fff" stroke="#444" />
      </Pointer>
    </Window>
  );
}

export default App;
